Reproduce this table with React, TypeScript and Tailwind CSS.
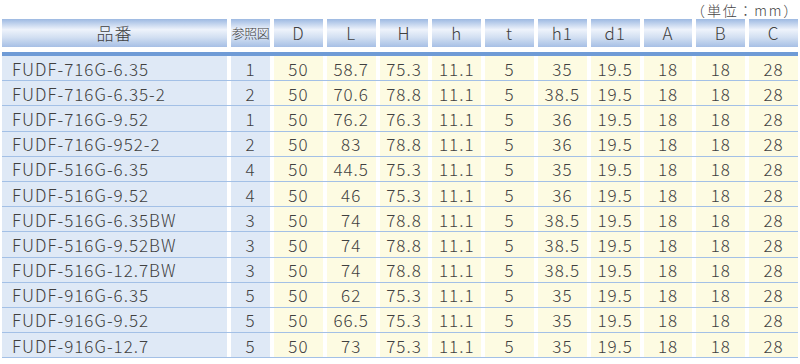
const columns = ["D", "L", "H", "h", "t", "h1", "d1", "A", "B", "C"];

const rows: [string, string, ...string[]][] = [
  ["FUDF-716G-6.35", "1", "50", "58.7", "75.3", "11.1", "5", "35", "19.5", "18", "18", "28"],
  ["FUDF-716G-6.35-2", "2", "50", "70.6", "78.8", "11.1", "5", "38.5", "19.5", "18", "18", "28"],
  ["FUDF-716G-9.52", "1", "50", "76.2", "76.3", "11.1", "5", "36", "19.5", "18", "18", "28"],
  ["FUDF-716G-952-2", "2", "50", "83", "78.8", "11.1", "5", "36", "19.5", "18", "18", "28"],
  ["FUDF-516G-6.35", "4", "50", "44.5", "75.3", "11.1", "5", "35", "19.5", "18", "18", "28"],
  ["FUDF-516G-9.52", "4", "50", "46", "75.3", "11.1", "5", "36", "19.5", "18", "18", "28"],
  ["FUDF-516G-6.35BW", "3", "50", "74", "78.8", "11.1", "5", "38.5", "19.5", "18", "18", "28"],
  ["FUDF-516G-9.52BW", "3", "50", "74", "78.8", "11.1", "5", "38.5", "19.5", "18", "18", "28"],
  ["FUDF-516G-12.7BW", "3", "50", "74", "78.8", "11.1", "5", "38.5", "19.5", "18", "18", "28"],
  ["FUDF-916G-6.35", "5", "50", "62", "75.3", "11.1", "5", "35", "19.5", "18", "18", "28"],
  ["FUDF-916G-9.52", "5", "50", "66.5", "75.3", "11.1", "5", "35", "19.5", "18", "18", "28"],
  ["FUDF-916G-12.7", "5", "50", "73", "75.3", "11.1", "5", "35", "19.5", "18", "18", "28"],
];

const grid = "grid grid-cols-[225px_39px_repeat(10,1fr)] gap-x-[4px]";
const headCell =
  "flex h-full items-center justify-center bg-[linear-gradient(to_bottom,#9db9e2_0%,#eef3fb_38%,#d3e0f2_65%,#a6bfe5_100%)]";

export default function App() {
  return (
    <main className="h-[364px] w-[800px] overflow-hidden bg-white font-['Noto_Sans_CJK_JP',sans-serif] font-light text-[#404040]">
      <div className="h-[19px] pr-[1px] pt-[3px] text-right text-[14px] leading-[14px] tracking-[1.8px] text-[#444]">
        （単位：mm）
      </div>
      <div className="mx-[2px]">
        <div className={`${grid} h-[28px] text-[17px] tracking-[1px]`}>
          <div className={headCell}>品番</div>
          <div className={`${headCell} text-[13px] tracking-[-0.5px]`}>参照図</div>
          {columns.map((c) => (
            <div key={c} className={headCell}>
              {c}
            </div>
          ))}
        </div>
        <div className="mt-[5px] h-[4px] bg-[#6f9bd6]" />
        {rows.map(([name, fig, ...vals]) => (
          <div key={name} className={`${grid} h-[25.2px] border-b border-[#a3c0e6] text-[17px] leading-none tracking-[1px]`}>
            <div className="flex items-center bg-[#dfe9f6] pl-[10px]">{name}</div>
            <div className="flex items-center justify-center bg-[#dfe9f6]">{fig}</div>
            {vals.map((v, i) => (
              <div key={i} className="flex items-center justify-center bg-[#fdfbe2]">
                {v}
              </div>
            ))}
          </div>
        ))}
      </div>
    </main>
  );
}
